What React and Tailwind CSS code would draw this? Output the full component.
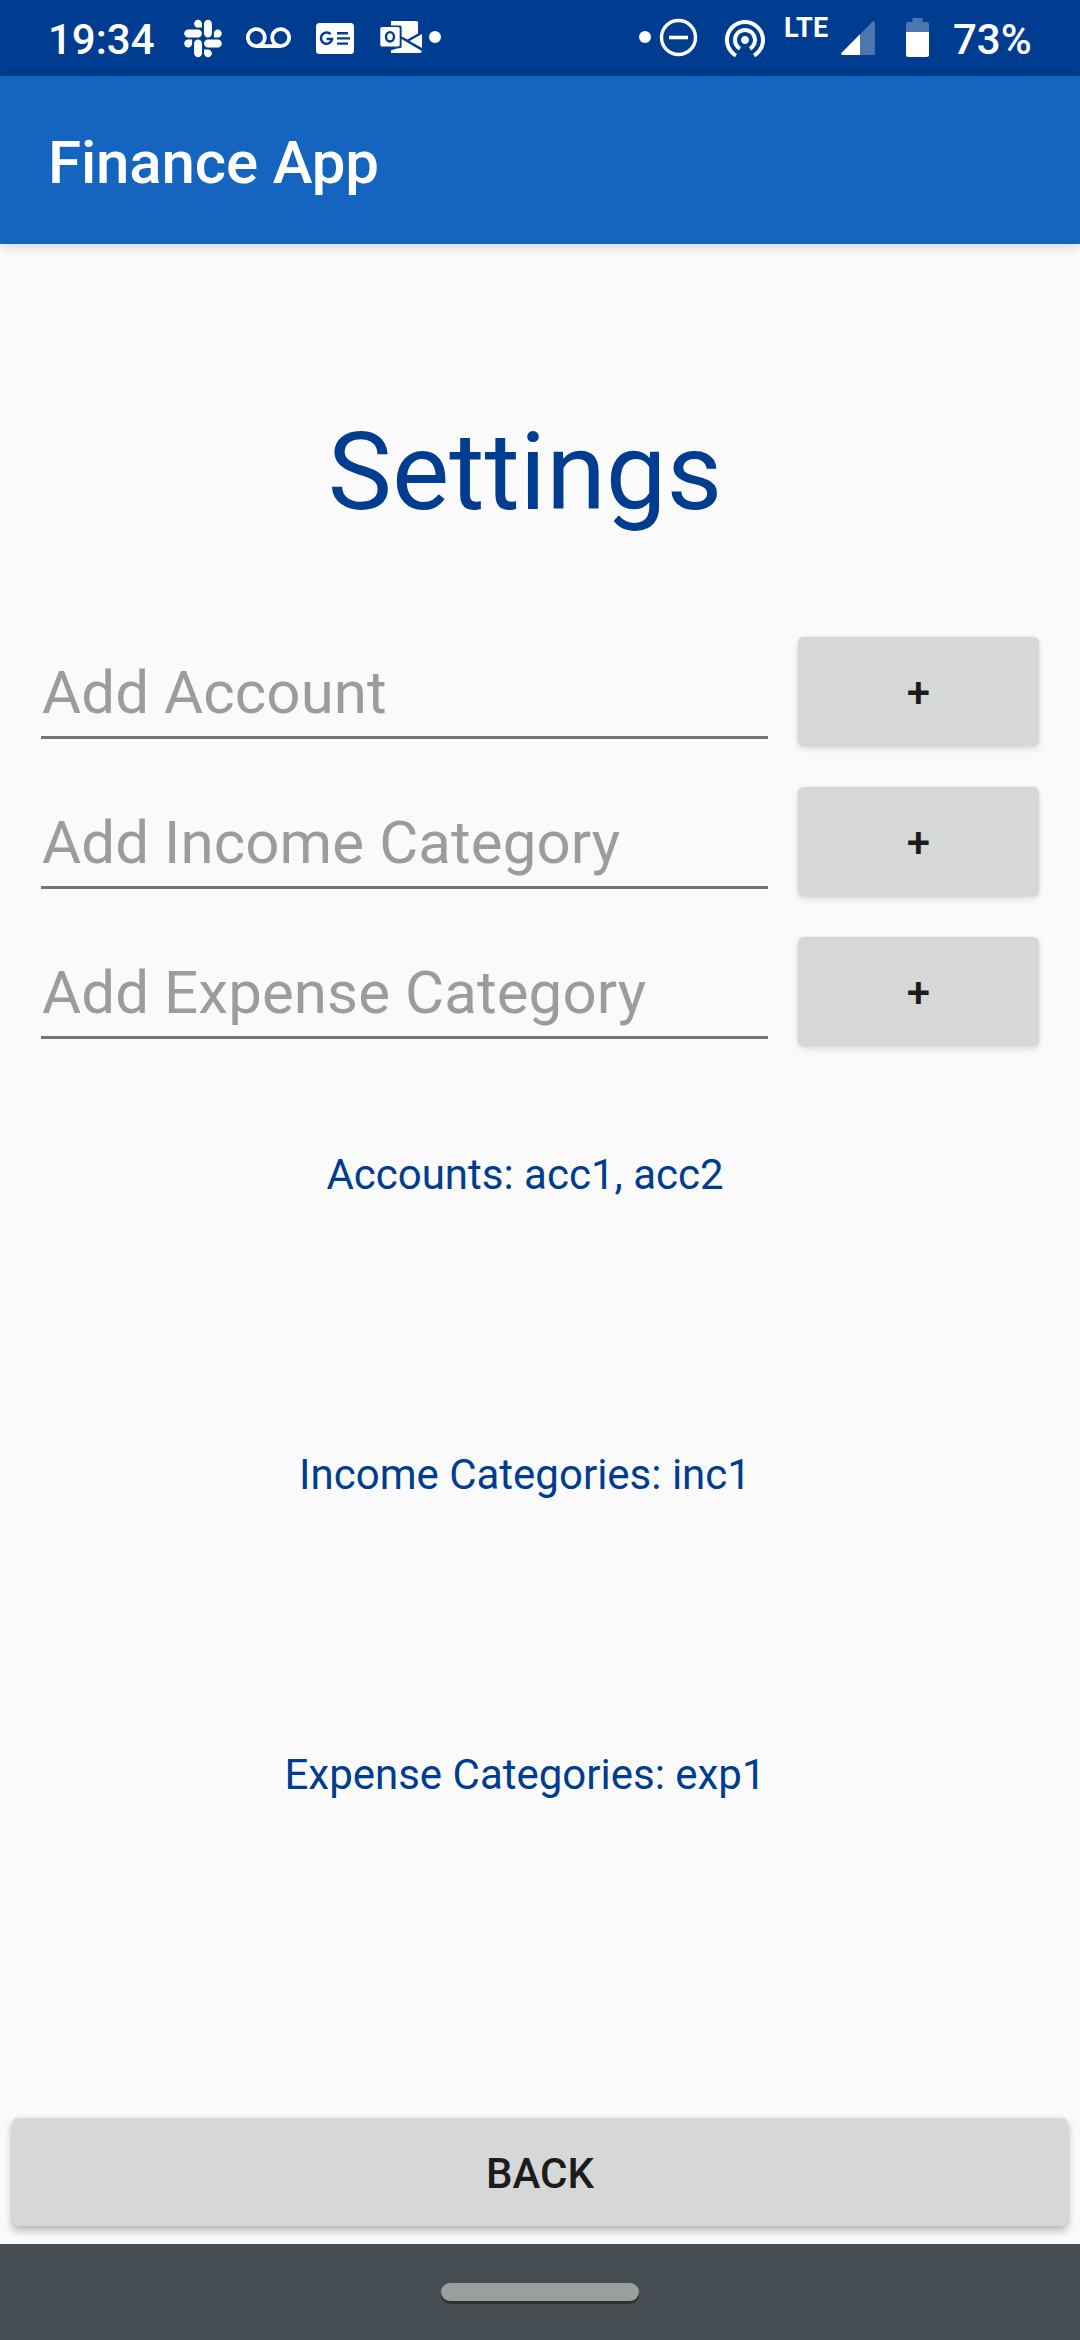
import React from "react";
import { FaSlack } from "react-icons/fa";
import { MdVoicemail, MdWifiTethering } from "react-icons/md";

function NewsIcon() {
  return (
    <svg className="ml-[25px] h-[31px] w-[38px] shrink-0" viewBox="0 0 38 31" fill="none">
      <rect width="38" height="31" rx="3.5" fill="#fff" />
      <path d="M14.6 11.2A5.6 5.6 0 1 0 16.1 16H10.6" stroke="#003c8f" strokeWidth="2.5" />
      <path d="M21 10.2H32M21 15.4H34M21 20.6H32" stroke="#003c8f" strokeWidth="2.4" />
    </svg>
  );
}

function OutlookIcon() {
  return (
    <svg className="ml-[26px] h-[76px] w-[61px] shrink-0" viewBox="380 0 61 76">
      <g fill="#fff">
        <path d="M391 21H416.5Q418 21 418 22.5V33.5L407.5 39.5L401.6 36.5V27Q401.6 25.5 400 25.5H391Z" />
        <path d="M422 34V48L409.5 41Z" />
        <path d="M401.6 39L421.8 51Q421.8 53 420 53H391V50.2L398 48.2H400Q401.6 48.2 401.6 46.6Z" />
        <rect x="380.3" y="27" width="19.4" height="19.4" rx="1.6" />
      </g>
      <ellipse cx="390" cy="36.8" rx="4" ry="4.7" fill="none" stroke="#003c8f" strokeWidth="2.4" />
      <circle cx="435" cy="37" r="6" fill="#fff" />
    </svg>
  );
}

function DoNotDisturbIcon() {
  return (
    <svg className="h-[76px] w-[59px] shrink-0" viewBox="639 0 59 76">
      <circle cx="645" cy="37" r="6" fill="#fff" />
      <circle cx="678.5" cy="37.5" r="17" fill="none" stroke="#fff" strokeWidth="3.4" />
      <path d="M669 37.5H688" stroke="#fff" strokeWidth="3.6" />
    </svg>
  );
}

function SignalIcon() {
  return (
    <svg className="h-[76px] w-[34px] shrink-0" viewBox="841 0 34 76" fill="#fff">
      <path d="M860 34.2L872.4 21.8Q875 20 875 23V53.5Q875 55 873.5 55H860Z" fillOpacity="0.3" />
      <path d="M860 34.2V55H843Q840 55 841.8 52.4Z" />
    </svg>
  );
}

function BatteryIcon() {
  return (
    <svg className="ml-[31px] h-[76px] w-[23px] shrink-0" viewBox="906 0 23 76" fill="#fff">
      <path d="M906 32V24.5Q906 22 908.5 22H912.5V18H922.5V22H926.5Q929 22 929 24.5V32Z" fillOpacity="0.3" />
      <path d="M906 32H929V54.5Q929 57 926.5 57H908.5Q906 57 906 54.5Z" />
    </svg>
  );
}

function StatusBar() {
  return (
    <div className="flex h-[76px] items-center justify-between bg-[#003c8f] text-[42px] font-medium leading-none text-white">
      <div className="flex h-full items-center pl-[48px]">
        <span className="w-[136px] shrink-0 pt-[3px]">19:34</span>
        <div className="flex h-full w-[38px] shrink-0 items-center justify-center">
          <FaSlack className="h-[43px] w-[38px]" />
        </div>
        <MdVoicemail className="ml-[24px] h-[45px] w-[45px] shrink-0" />
        <NewsIcon />
        <OutlookIcon />
      </div>
      <div className="flex h-full w-[441px] items-center">
        <DoNotDisturbIcon />
        <MdWifiTethering className="ml-[23px] h-[48px] w-[48px] shrink-0" />
        <span className="ml-[15px] w-[57px] shrink-0 self-start pt-[16px] text-[27px] font-bold leading-[25px] tracking-[0.3px]">LTE</span>
        <SignalIcon />
        <BatteryIcon />
        <span className="ml-[24px] pt-[3px]">73%</span>
      </div>
    </div>
  );
}

function AddRow({ hint }) {
  return (
    <div className="flex h-[109px] items-start gap-[30px]">
      <input
        placeholder={hint}
        className="h-[102px] w-[727px] border-b-[3px] border-[#757575] bg-transparent pt-[12px] pl-px text-[60px] tracking-[0.1px] outline-none placeholder:text-[#9c9c9c] placeholder:opacity-100"
      />
      <button className="h-[109px] w-[241px] rounded-[6px] bg-[#d6d8d7] pt-[3px] text-[42px] font-medium leading-none text-[#1c1c1c] shadow-[0_3px_6px_rgba(0,0,0,0.12),0_0_3px_rgba(0,0,0,0.08)]">
        +
      </button>
    </div>
  );
}

const hints = ["Add Account", "Add Income Category", "Add Expense Category"];
const summaries = ["Accounts: acc1, acc2", "Income Categories: inc1", "Expense Categories: exp1"];

export default function App() {
  return (
    <div className="flex h-[2340px] w-[1080px] flex-col overflow-hidden bg-[#fafafa] font-['Roboto',sans-serif]">
      <StatusBar />
      <header className="flex h-[168px] shrink-0 items-center bg-[#1565c0] pt-[5px] pl-[48px] text-[60px] font-medium leading-none tracking-[-0.15px] text-white shadow-[0_3px_12px_rgba(0,0,0,0.14)]">
        Finance App
      </header>
      <main className="flex flex-1 flex-col text-[#003c8f]">
        <h1 className="mt-[158px] pr-[30px] text-center text-[108px] leading-[140px]">Settings</h1>
        <div className="mt-[95px] flex flex-col gap-[41px] pl-[41px] text-black">
          {hints.map((hint) => (
            <AddRow key={hint} hint={hint} />
          ))}
        </div>
        <div className="mt-[99px] pr-[30px] text-center text-[42px] leading-[60px]">
          {summaries.map((line) => (
            <p key={line} className="h-[300px]">{line}</p>
          ))}
        </div>
        <button className="mx-[12px] mt-auto mb-[18px] h-[108px] rounded-[6px] bg-[#d6d8d7] pt-[3px] text-[42px] font-medium leading-none text-[#1c1c1c] shadow-[0_5px_9px_rgba(0,0,0,0.26),0_0_4px_rgba(0,0,0,0.08)]">
          BACK
        </button>
      </main>
      <footer className="flex h-[96px] shrink-0 justify-center bg-[#454c52] pt-[39px]">
        <div className="h-[18px] w-[198px] rounded-full bg-[#9b9e9e] shadow-[0_3px_0_#2d3333]" />
      </footer>
    </div>
  );
}
